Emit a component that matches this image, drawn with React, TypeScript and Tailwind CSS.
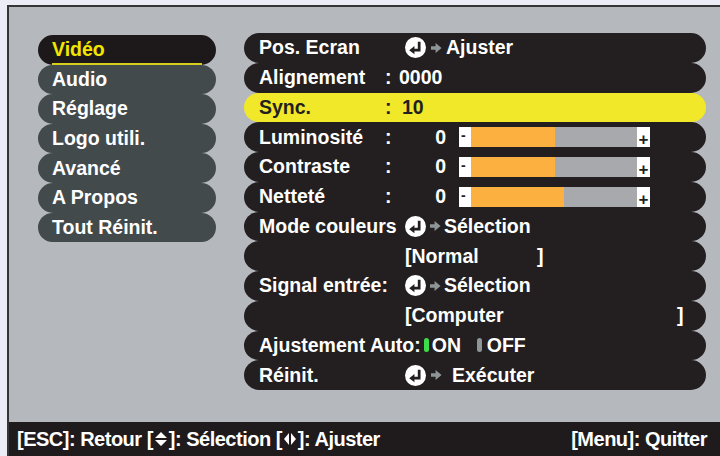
import React from 'react'

const font = { fontFamily: '"Liberation Sans", Arial, sans-serif' }

const EnterIcon = () => (
  <svg width="21" height="21" viewBox="0 0 20 20" className="shrink-0">
    <circle cx="10" cy="10" r="10" fill="#fff" />
    <path d="M13.5 4.5 V12.5 H8" stroke="#231f20" strokeWidth="2.6" fill="none" />
    <path d="M4 12.5 L9 8.5 V16.5 Z" fill="#231f20" />
  </svg>
)

const GrayArrow = () => (
  <svg width="11" height="12" viewBox="0 0 12 12" className="shrink-0">
    <path d="M0 4 H5 V0.5 L11.5 6 L5 11.5 V8 H0 Z" fill="#8d9596" />
  </svg>
)

const Slider = ({ fill }: { fill: number }) => (
  <div className="flex h-[20px] w-[191px] ml-[13px]">
    <div className="w-[12px] bg-white text-[#231f20] text-[14px] leading-[16px] pl-[2px]">-</div>
    <div className="bg-[#fbb040]" style={{ width: fill }} />
    <div className="flex-1 bg-[#a7a9ac]" />
    <div className="w-[13px] bg-white text-[#231f20] text-[17px] leading-[26px] text-center">+</div>
  </div>
)

const menu = ['Vidéo', 'Audio', 'Réglage', 'Logo utili.', 'Avancé', 'A Propos', 'Tout Réinit.']

const Row = ({ children, active }: { children: React.ReactNode; active?: boolean }) => (
  <div
    className={`flex items-center h-[29.75px] rounded-full pl-[15px] whitespace-nowrap ${
      active ? 'bg-[#f2e82a] text-[#231f20]' : 'bg-[#231f20] text-white'
    }`}
  >
    {children}
  </div>
)

export default function App() {
  return (
    <div className="w-[720px] h-[456px] bg-[#ececf6] pl-[7px] pt-[5px] overflow-hidden" style={font}>
      <div className="flex flex-col h-full border-l-2 border-t-2 border-[#353535] bg-[#b5b9bd]">
        <div className="flex flex-1 pl-[29px] pt-[28px] gap-[28px] text-[19.5px] font-bold">
          <div className="flex flex-col w-[178px]">
            {menu.map((m, i) => (
              <div
                key={m}
                className={`relative flex items-center h-[29.6px] rounded-full pl-[14px] ${
                  i === 0 ? 'bg-[#1d191a] text-[#f3e600]' : 'bg-[#434a4c] text-white'
                }`}
              >
                {m}
                {i === 0 && <div className="absolute left-[14px] right-[14px] bottom-0 h-[2px] bg-[#d8cf1c]" />}
              </div>
            ))}
          </div>

          <div className="flex flex-col w-[462px] -mt-[2px]">
            <Row>
              <span className="w-[146px]">Pos. Ecran</span>
              <EnterIcon />
              <span className="ml-[5px]"><GrayArrow /></span>
              <span className="ml-[4px]">Ajuster</span>
            </Row>
            <Row>
              <span className="w-[126px]">Alignement</span>
              <span className="w-[14px]">:</span>
              <span>0000</span>
            </Row>
            <Row active>
              <span className="w-[126px]">Sync.</span>
              <span className="w-[17px]">:</span>
              <span>10</span>
            </Row>
            {[
              ['Luminosité', 84],
              ['Contraste', 84],
              ['Netteté', 93],
            ].map(([l, f]) => (
              <Row key={l as string}>
                <span className="w-[126px]">{l}</span>
                <span className="w-[20px]">:</span>
                <span className="w-[41px] text-right">0</span>
                <Slider fill={f as number} />
              </Row>
            ))}
            <Row>
              <span className="w-[146px]">Mode couleurs</span>
              <EnterIcon />
              <span className="ml-[4px]"><GrayArrow /></span>
              <span className="ml-[3px]">Sélection</span>
            </Row>
            <Row>
              <span className="w-[146px]" />
              <span className="w-[132px]">[Normal</span>
              <span>]</span>
            </Row>
            <Row>
              <span className="w-[146px]">Signal entrée:</span>
              <EnterIcon />
              <span className="ml-[4px]"><GrayArrow /></span>
              <span className="ml-[3px]">Sélection</span>
            </Row>
            <Row>
              <span className="w-[146px]" />
              <span className="w-[272px]">[Computer</span>
              <span>]</span>
            </Row>
            <Row>
              <span className="mr-[3px]">Ajustement Auto:</span>
              <span className="w-[5px] h-[14px] rounded-full bg-[#3ddc4a]" />
              <span className="ml-[3px] w-[45px]">ON</span>
              <span className="w-[5px] h-[14px] rounded-full bg-[#8d9596]" />
              <span className="ml-[5px]">OFF</span>
            </Row>
            <Row>
              <span className="w-[146px]">Réinit.</span>
              <EnterIcon />
              <span className="ml-[5px]"><GrayArrow /></span>
              <span className="ml-[10px]">Exécuter</span>
            </Row>
          </div>
        </div>

        <div className="flex items-center justify-between h-[34px] bg-[#1f1b1c] text-white text-[20px] font-bold tracking-[-0.5px] pl-[8px] pr-[13px]">
          <div className="flex items-center">
            <span>[ESC]: Retour [</span>
            <svg width="14" height="16" viewBox="0 0 14 16" className="mx-[1px]">
              <path d="M7 1 L13 7 H1 Z M1 9 H13 L7 15 Z" fill="#fff" />
            </svg>
            <span>]: Sélection [</span>
            <svg width="14" height="16" viewBox="0 0 14 16" className="mx-[1px]">
              <path d="M6 2 V14 L1 8 Z M8 2 L13 8 L8 14 Z" fill="#fff" />
            </svg>
            <span>]: Ajuster</span>
          </div>
          <span>[Menu]: Quitter</span>
        </div>
      </div>
    </div>
  )
}
